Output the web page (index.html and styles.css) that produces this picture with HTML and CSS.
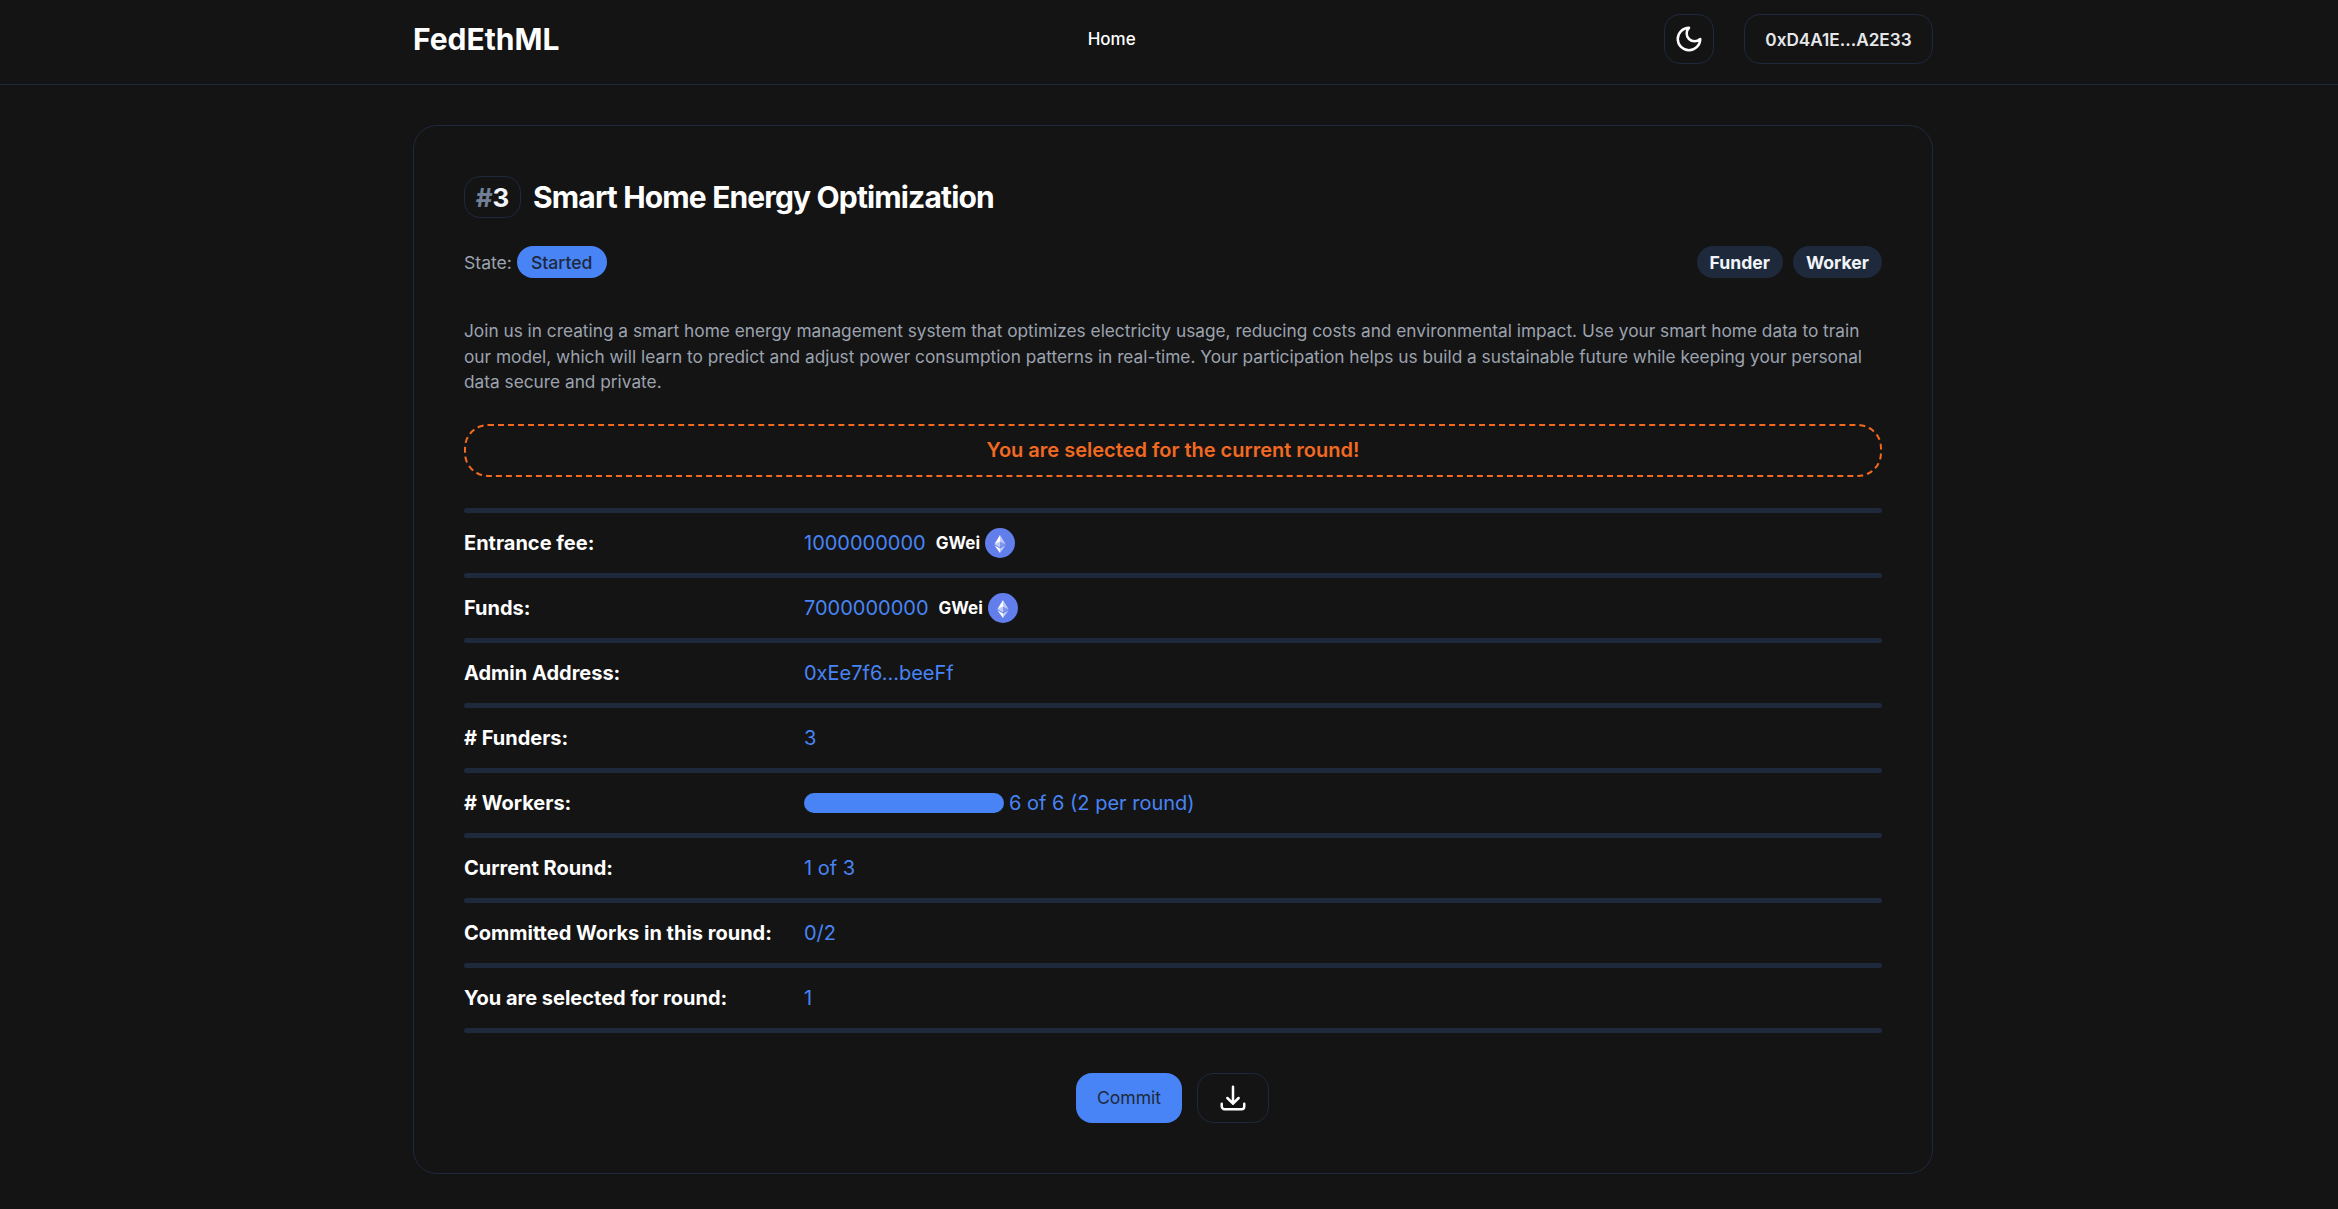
FILE: index.html
```html
<!DOCTYPE html>
<html lang="en">
<head>
    <meta charset="UTF-8">
    <meta name="viewport" content="width=device-width, initial-scale=1.0">
    <title>FedEthML</title>
    <link rel="stylesheet" href="styles.css">
</head>
<body>
    <header class="topbar">
        <div class="topbar-inner">
            <a class="logo" href="#">FedEthML</a>
            <a class="nav-link" href="#">Home</a>
            <div class="topbar-actions">
                <button class="btn-outline btn-theme" aria-label="Toggle theme">
                    <svg class="icon" viewBox="0 0 24 24" fill="none" stroke="currentColor" stroke-width="2" stroke-linecap="round" stroke-linejoin="round">
                        <path d="M12 3a6 6 0 0 0 9 9 9 9 0 1 1-9-9Z"/>
                    </svg>
                </button>
                <button class="btn-outline btn-wallet">0xD4A1E...A2E33</button>
            </div>
        </div>
    </header>

    <main class="page">
        <section class="card">
            <div class="title-row">
                <span class="task-id"><span class="hash">#</span>3</span>
                <h1>Smart Home Energy Optimization</h1>
            </div>

            <div class="state-row">
                <div class="state">
                    <span>State:</span>
                    <span class="pill pill-blue">Started</span>
                </div>
                <div class="roles">
                    <span class="pill pill-role">Funder</span>
                    <span class="pill pill-role">Worker</span>
                </div>
            </div>

            <p class="description">Join us in creating a smart home energy management system that optimizes electricity usage, reducing costs and environmental impact. Use your smart home data to train our model, which will learn to predict and adjust power consumption patterns in real-time. Your participation helps us build a sustainable future while keeping your personal data secure and private.</p>

            <div class="notice">You are selected for the current round!</div>

            <hr class="rule">
            <div class="row">
                <span class="label">Entrance fee:</span>
                <span class="value">1000000000 <b class="unit">GWei</b>
                    <svg class="eth" viewBox="0 0 30 30"><circle cx="15" cy="15" r="15" fill="#627eea"/><g transform="translate(0 1)"><path d="M15 6v6.7l5.6 2.5z" fill="#fff" fill-opacity=".6"/><path d="M15 6l-5.6 9.2 5.6-2.5z" fill="#fff"/><path d="M15 19.6V24l5.6-7.8z" fill="#fff" fill-opacity=".6"/><path d="M15 24v-4.4l-5.6-3.4z" fill="#fff"/><path d="M15 18.6l5.6-3.4-5.6-2.5z" fill="#fff" fill-opacity=".2"/><path d="M9.4 15.2l5.6 3.4v-5.9z" fill="#fff" fill-opacity=".6"/></g></svg>
                </span>
            </div>
            <hr class="rule">
            <div class="row">
                <span class="label">Funds:</span>
                <span class="value">7000000000 <b class="unit">GWei</b>
                    <svg class="eth" viewBox="0 0 30 30"><circle cx="15" cy="15" r="15" fill="#627eea"/><g transform="translate(0 1)"><path d="M15 6v6.7l5.6 2.5z" fill="#fff" fill-opacity=".6"/><path d="M15 6l-5.6 9.2 5.6-2.5z" fill="#fff"/><path d="M15 19.6V24l5.6-7.8z" fill="#fff" fill-opacity=".6"/><path d="M15 24v-4.4l-5.6-3.4z" fill="#fff"/><path d="M15 18.6l5.6-3.4-5.6-2.5z" fill="#fff" fill-opacity=".2"/><path d="M9.4 15.2l5.6 3.4v-5.9z" fill="#fff" fill-opacity=".6"/></g></svg>
                </span>
            </div>
            <hr class="rule">
            <div class="row">
                <span class="label">Admin Address:</span>
                <span class="value">0xEe7f6...beeFf</span>
            </div>
            <hr class="rule">
            <div class="row">
                <span class="label"># Funders:</span>
                <span class="value">3</span>
            </div>
            <hr class="rule">
            <div class="row">
                <span class="label"># Workers:</span>
                <span class="value">
                    <span class="progress"><span class="progress-fill"></span></span>
                    6 of 6 (2 per round)
                </span>
            </div>
            <hr class="rule">
            <div class="row">
                <span class="label">Current Round:</span>
                <span class="value">1 of 3</span>
            </div>
            <hr class="rule">
            <div class="row">
                <span class="label">Committed Works in this round:</span>
                <span class="value">0/2</span>
            </div>
            <hr class="rule">
            <div class="row">
                <span class="label">You are selected for round:</span>
                <span class="value">1</span>
            </div>
            <hr class="rule">

            <div class="actions">
                <button class="btn-primary">Commit</button>
                <button class="btn-outline btn-download" aria-label="Download">
                    <svg class="icon" viewBox="0 0 24 24" fill="none" stroke="currentColor" stroke-width="2" stroke-linecap="round" stroke-linejoin="round">
                        <path d="M3 16.5v2.25A2.25 2.25 0 0 0 5.25 21h13.5A2.25 2.25 0 0 0 21 18.75V16.5M16.5 12 12 16.5m0 0L7.5 12m4.5 4.5V3"/>
                    </svg>
                </button>
            </div>
        </section>
    </main>
</body>
</html>
```

FILE: styles.css
```css
* {
    box-sizing: border-box;
}

body {
    margin: 0;
    background-color: #141414;
    color: #fff;
    font-family: Inter, "Liberation Sans", sans-serif;
    font-size: 17.6px;
}

a {
    color: inherit;
    text-decoration: none;
}

button {
    font-family: inherit;
    cursor: pointer;
}

/* top bar */
.topbar {
    height: 85px;
    padding-left: 8px;
    border-bottom: 1px solid #1e293b;
}

.topbar-inner {
    width: 1520px;
    height: 78px;
    margin: 0 auto;
    display: flex;
    align-items: center;
    justify-content: space-between;
}

.logo {
    font-size: 30px;
    font-weight: 700;
}

.nav-link {
    font-size: 17px;
    font-weight: 500;
}

.topbar-actions {
    display: flex;
    gap: 30px;
}

.btn-outline {
    height: 50px;
    display: flex;
    align-items: center;
    justify-content: center;
    background: none;
    border: 1px solid #1e293b;
    border-radius: 16px;
    color: #fff;
}

.btn-theme {
    width: 50px;
    padding: 0;
}

.btn-wallet {
    width: 189px;
    padding: 0;
    font-size: 17.2px;
    font-weight: 600;
    color: #e5e7eb;
}

.icon {
    width: 30px;
    height: 30px;
}

/* card */
.page {
    padding: 40px 0 36px 8px;
}

.card {
    width: 1520px;
    margin: 0 auto;
    padding: 50px;
    border: 1px solid #1e293b;
    border-radius: 24px;
}

.title-row {
    display: flex;
    align-items: center;
    gap: 12px;
}

.task-id {
    width: 57px;
    height: 42px;
    display: flex;
    align-items: center;
    justify-content: center;
    border: 1px solid #1e293b;
    border-radius: 16px;
    font-size: 26px;
    font-weight: 700;
    color: #f1f5f9;
}

.hash {
    color: #718096;
}

h1 {
    margin: 0;
    font-size: 30px;
    font-weight: 700;
    letter-spacing: -0.85px;
}

.state-row {
    margin-top: 28px;
    display: flex;
    align-items: center;
    justify-content: space-between;
}

.state {
    display: flex;
    align-items: center;
    gap: 5px;
    color: #9ca3af;
}

.roles {
    display: flex;
    gap: 10px;
}

.pill {
    height: 32px;
    padding: 0 13px;
    display: inline-flex;
    align-items: center;
    border-radius: 16px;
    font-weight: 500;
}

.pill-blue {
    padding: 0 15px 0 14px;
    background-color: #4884f5;
    color: #1e293b;
}

.pill-role {
    background-color: #1e293b;
    color: #f1f5f9;
    font-weight: 700;
}

.description {
    margin: 40px 0 0;
    font-size: 17.28px;
    line-height: 25.6px;
    color: #9ca3af;
}

.notice {
    height: 53px;
    margin-top: 29px;
    display: flex;
    align-items: center;
    justify-content: center;
    border: 2px dashed #f26a21;
    border-radius: 24px;
    color: #f26a21;
    font-size: 20px;
    font-weight: 600;
}

/* detail rows */
.rule {
    height: 5px;
    margin: 0;
    border: none;
    border-radius: 3px;
    background-color: #1e293b;
}

.notice + .rule {
    margin-top: 31px;
}

.row {
    height: 60px;
    display: flex;
    align-items: center;
}

.label {
    width: 340px;
    font-size: 20px;
    font-weight: 700;
}

.value {
    display: flex;
    align-items: center;
    gap: 5px;
    font-size: 20px;
    color: #4884f5;
}

.unit {
    margin-left: 5px;
    font-size: 17px;
    font-weight: 700;
    color: #fff;
}

.eth {
    width: 30px;
    height: 30px;
}

.progress {
    width: 200px;
    height: 20px;
    border-radius: 10px;
    background-color: #1e293b;
    overflow: hidden;
}

.progress-fill {
    display: block;
    width: 100%;
    height: 100%;
    background-color: #4884f5;
}

/* buttons */
.actions {
    margin-top: 40px;
    padding-right: 1px;
    display: flex;
    justify-content: center;
    gap: 15px;
}

.btn-primary {
    width: 106px;
    height: 50px;
    border: none;
    border-radius: 16px;
    background-color: #4884f5;
    color: #1e293b;
    font-size: 17.6px;
}

.btn-download {
    width: 72px;
}
```
